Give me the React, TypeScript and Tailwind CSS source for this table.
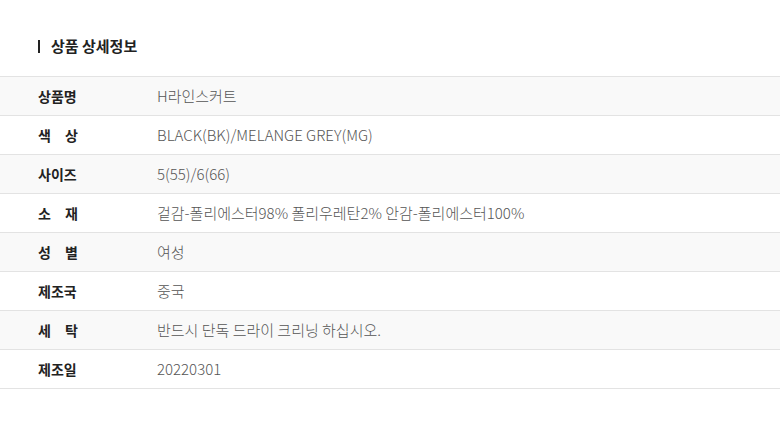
const rows: [string, string][] = [
  ['상품명', 'H라인스커트'],
  ['색　상', 'BLACK(BK)/MELANGE GREY(MG)'],
  ['사이즈', '5(55)/6(66)'],
  ['소　재', '겉감-폴리에스터98% 폴리우레탄2% 안감-폴리에스터100%'],
  ['성　별', '여성'],
  ['제조국', '중국'],
  ['세　탁', '반드시 단독 드라이 크리닝 하십시오.'],
  ['제조일', '20220301'],
];

export default function App() {
  return (
    <div className="w-[780px] h-[427px] bg-white font-['Noto_Sans_CJK_KR',sans-serif]">
      <div className="pt-[36px] h-[76px] pl-[38px]">
        <h2 className="flex items-center gap-[11px] text-[15px] font-bold text-[#222] leading-[20px]">
          <span className="w-[2px] h-[13px] bg-[#222]" />
          상품 상세정보
        </h2>
      </div>
      <div className="border-t border-[#e3e3e3]">
        {rows.map(([label, value], i) => (
          <div
            key={label}
            className={`flex items-center h-[39px] border-b border-[#e3e3e3] ${
              i % 2 === 0 ? 'bg-[#f9f9f9]' : 'bg-white'
            }`}
          >
            <div className="w-[157px] pl-[38px] text-[14px] font-bold text-[#222] whitespace-pre">{label}</div>
            <div className="text-[15px] font-light text-[#555]">{value}</div>
          </div>
        ))}
      </div>
    </div>
  );
}
